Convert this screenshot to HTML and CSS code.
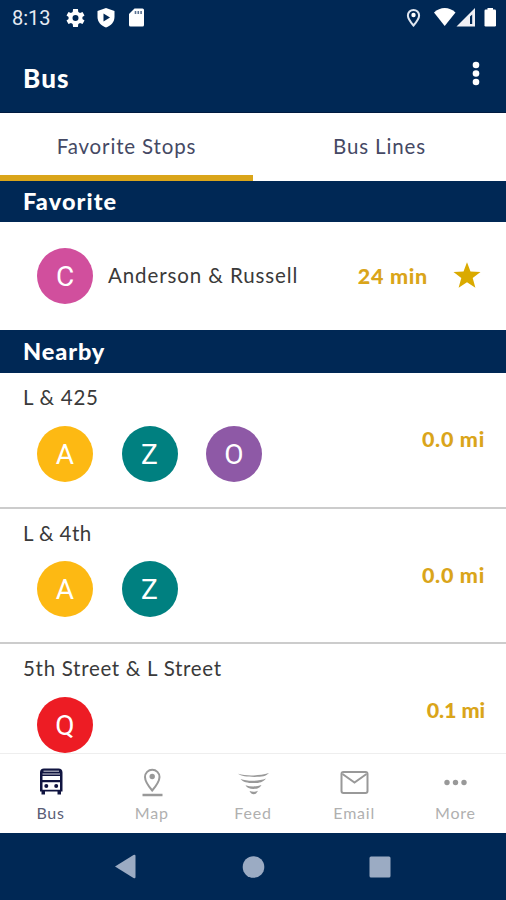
FILE: index.html
```html
<!DOCTYPE html>
<html lang="en">
<head>
<meta charset="utf-8">
<title>Bus</title>
<link rel="stylesheet" href="styles.css">
</head>
<body>
<div class="phone">
  <header class="status">
    <span class="clock">8:13</span>
    <svg class="gear" width="20" height="20" viewBox="2 2 20 20"><path fill="#fff" d="M19.4 13a7.500 7.500 0 0 0 0-2l2.100-1.600-2-3.500-2.500 1a7.500 7.500 0 0 0-1.700-1L14.900 3h-4.800l-.4 2.900a7.500 7.500 0 0 0-1.700 1l-2.500-1-2 3.500L5.600 11a7.500 7.500 0 0 0 0 2l-2.100 1.600 2 3.500 2.500-1a7.500 7.500 0 0 0 1.700 1l.4 2.900h4.800l.4-2.900a7.500 7.500 0 0 0 1.700-1l2.500 1 2-3.500zM12.500 15a3 3 0 1 1 0-6 3 3 0 0 1 0 6z"/></svg>
    <svg class="shield" width="18" height="20" viewBox="0 0 18 20"><path fill="#fff" d="M9 0 17.500 3V9c0 5-3.500 8.800-8.500 10.500C4 17.800.5 14 .5 9V3z"/><path fill="#002855" d="M6.500 5.500v8l6.500-4z"/></svg>
    <svg class="card" width="15" height="19" viewBox="0 0 15 19"><path fill="#fff" d="M5.500.5h8a1.500 1.500 0 0 1 1.500 1.500v15a1.500 1.500 0 0 1-1.500 1.500h-12A1.500 1.500 0 0 1 0 17V6z"/><path stroke="#5a7292" stroke-width="1.600" d="M6.500 3v3M9.300 3v3M12.100 3v3"/></svg>
    <svg class="signals" width="91" height="20" viewBox="406 8 91 20"><path fill="none" stroke="#dfe6f0" stroke-width="2" d="M413.500 25.500c-3.500-4-5.600-7-5.600-10a5.600 5.600 0 0 1 11.200 0c0 3-2.100 6-5.600 10z"/><circle cx="413.500" cy="15" r="2.200" fill="#fff"/><path fill="#fff" d="M434 12.500c6-6 15.500-6 21.500 0L444.700 26z"/><path fill="#f0f0f4" fill-rule="evenodd" d="M475 8v18.500h-18.500zM470 16.500v7.500h2.200v-9.500z"/><rect x="484.500" y="9.500" width="11.500" height="17" rx="1.200" fill="#fff"/><rect x="487.500" y="8" width="5.500" height="3" fill="#fff"/></svg>
  </header>
  <div class="appbar"><h1>Bus</h1><svg width="8" height="26" viewBox="0 0 8 26" fill="#fff"><circle cx="4" cy="4" r="3.300"/><circle cx="4" cy="12.500" r="3.300"/><circle cx="4" cy="21" r="3.300"/></svg></div>
  <nav class="tabs"><div class="tab selected"><span>Favorite Stops</span></div><div class="tab"><span>Bus Lines</span></div></nav>
  <h2 class="section fav">Favorite</h2>
  <div class="favorite">
    <span class="line pink">C</span><span class="name">Anderson &amp; Russell</span><span class="value wait">24 min</span>
    <svg width="28" height="27" viewBox="0 0 28 27"><path fill="#daaa00" d="M14 .2l3.500 9.200 10 .5-7.800 6.200 2.700 9.700L14 20.300l-8.400 5.500 2.700-9.700L.5 9.900l10-.5z"/></svg>
  </div>
  <h2 class="section near">Nearby</h2>
  <main class="stops">
    <section class="stop"><div><h3>L &amp; 425</h3><div class="lines"><span class="line amber">A</span><span class="line teal">Z</span><span class="line purple">O</span></div></div><span class="value">0.0 mi</span></section>
    <section class="stop"><div><h3 class="fourth">L &amp; 4th</h3><div class="lines"><span class="line amber">A</span><span class="line teal">Z</span></div></div><span class="value">0.0 mi</span></section>
    <section class="stop"><div><h3>5th Street &amp; L Street</h3><div class="lines"><span class="line red">Q</span></div></div><span class="value tenth">0.1 mi</span></section>
  </main>
  <nav class="bottom">
    <div class="item active"><svg width="36" height="32" viewBox="33 766 36 32"><path fill="#101440" fill-rule="evenodd" d="M44 768.500h14.500c2.500 0 4 1.500 4 4v19h-1.500v3h-3.500v-3h-12.500v3h-3.500v-3H40v-19c0-2.500 1.500-4 4-4zM42.500 776v4h17.500v-4zM42.500 782.300v7.400h17.500v-7.400z"/><path stroke="#9294a8" stroke-width="1.600" d="M43.500 771.300h15.500M42.500 774h17.500"/><circle cx="46.300" cy="786" r="2" fill="#101440"/><circle cx="56.200" cy="786" r="2" fill="#101440"/></svg><span>Bus</span></div>
    <div class="item"><svg width="36" height="32" viewBox="134 766 36 32" fill="none" stroke="#999" stroke-width="2"><path d="M152.200 790.500c-4.700-5.500-7.200-9-7.200-13.500a7.200 7.200 0 0 1 14.500 0c0 4.500-2.600 8-7.300 13.500z"/><circle cx="152.200" cy="776.500" r="2.700" fill="#999" stroke="none"/><path d="M142.500 795h20" stroke-width="2.500"/></svg><span>Map</span></div>
    <div class="item"><svg width="36" height="32" viewBox="236 766 36 32" fill="#999"><path d="M239 773.800c9 2.400 20 2.200 31-.8-3 3.300-7 3.900-14.500 3.900s-13.500-.6-16.500-3.100z"/><path d="M241.500 779c7 2.500 18 2.500 25.500-.5-3 3.800-6.500 4.600-12.500 4.600s-10.500-1-13-4.100z"/><path d="M246.500 785.200c5 1.700 11 1.700 16-.2-2 3.200-4 3.900-8 3.900s-6.500-1-8-3.700z"/><path d="M250.500 791c3 1 5.500 1 8.500-.2-1.500 2.700-2.500 3.500-4.300 3.500s-3-1-4.200-3.300z"/></svg><span>Feed</span></div>
    <div class="item"><svg width="36" height="32" viewBox="336 766 36 32" fill="none" stroke="#999" stroke-width="2"><rect x="341.500" y="772" width="26" height="21" rx="2"/><path d="M342.500 774l12 8.500 12-8.500"/></svg><span>Email</span></div>
    <div class="item"><svg width="36" height="32" viewBox="437.500 766 36 32" fill="#999"><circle cx="447.500" cy="782.500" r="2.700"/><circle cx="456" cy="782.500" r="2.700"/><circle cx="464.500" cy="782.500" r="2.700"/></svg><span>More</span></div>
  </nav>
  <footer class="system"><svg width="506" height="66" viewBox="0 834 506 66" fill="#9babc3"><path d="M115 866.500l18.500-11.500q2-1 2 1v21q0 2-2 1z"/><circle cx="253.500" cy="867" r="10.800"/><rect x="369.500" y="856.500" width="21" height="21" rx="1.500"/></svg></footer>
</div>
</body>
</html>
```
FILE: styles.css
```css
* { box-sizing: border-box; margin: 0; padding: 0; }
body { width: 506px; height: 900px; overflow: hidden; background: #fff; font-family: Lato, "Open Sans", sans-serif; color: #3a3a3a; }
svg { display: block; flex: none; }
.phone { height: 900px; display: flex; flex-direction: column; }
.phone > * { flex: none; }
.status { height: 40px; background: #002855; display: flex; align-items: flex-start; padding: 8px 9px 0 12px; }
.clock { width: 54px; font: 20px/21px Roboto, sans-serif; color: #e6ebf3; }
.gear { margin-left: -1px; }
.shield { margin-left: 12px; }
.card { margin-left: 14px; }
.signals { margin-left: auto; }
.appbar { height: 73px; background: #002855; padding: 0 26px 0 23px; display: flex; justify-content: space-between; align-items: center; border-bottom: 1px solid #001a40; }
.appbar svg { margin-bottom: 4px; }
h1 { font-size: 26px; line-height: 32px; font-weight: 900; letter-spacing: 1.1px; color: #fff; padding-top: 4px; }
.tabs { height: 68px; display: flex; }
.tab { flex: 1; text-align: center; font-size: 20.5px; line-height: 24px; padding-top: 21px; color: #454964; letter-spacing: .85px; border-bottom: 6px solid transparent; white-space: nowrap; }
.tab.selected { border-color: #daa51a; }
.section { background: #002855; color: #fff; padding-left: 23px; font-size: 23.5px; line-height: 41px; font-weight: 900; letter-spacing: 1.1px; }
.fav { height: 41px; }
.near { height: 43px; line-height: 43px; letter-spacing: .9px; }
.favorite { height: 108px; padding: 0 25px 0 37px; display: flex; align-items: center; }
.line { width: 56px; height: 56px; flex: none; border-radius: 50%; color: #fff; font: 28px/58px Roboto, sans-serif; text-align: center; }
.pink { background: #d14f9d; }
.amber { background: #fdb913; }
.teal { background: #008080; }
.purple { background: #8e59a6; }
.red { background: #ed1c24; }
.name { margin-left: 15px; padding-bottom: 2px; font-size: 20.5px; letter-spacing: .9px; white-space: nowrap; }
.value { color: #daa51a; font-size: 21.5px; line-height: 26px; font-weight: 900; letter-spacing: .7px; white-space: nowrap; }
.wait { margin-left: auto; margin-right: 25px; padding-bottom: 1px; }
.favorite svg { margin-bottom: 2px; }
.stops { height: 380px; overflow: hidden; }
.stop { height: 135.500px; border-bottom: 2px solid #ccc; padding: 12px 21px 0 23px; display: flex; justify-content: space-between; }
.stop .value { margin-top: 41px; }
.stop .tenth { letter-spacing: -.1px; }
h3 { font-size: 20.5px; line-height: 24px; font-weight: 400; letter-spacing: .7px; white-space: nowrap; }
.fourth { letter-spacing: .4px; }
.lines { display: flex; gap: 28.5px; padding: 16.800px 0 0 14px; }
.bottom { height: 80px; border-top: 1px solid #eee; display: flex; padding-top: 12px; }
.item { flex: 1; display: flex; flex-direction: column; align-items: center; color: #b0b0b0; font-size: 16px; line-height: 20px; letter-spacing: .8px; }
.item svg { margin-bottom: 5px; }
.item.active { color: #5a5d76; }
.system { height: 67px; background: #002855; padding-top: 1px; }
```
